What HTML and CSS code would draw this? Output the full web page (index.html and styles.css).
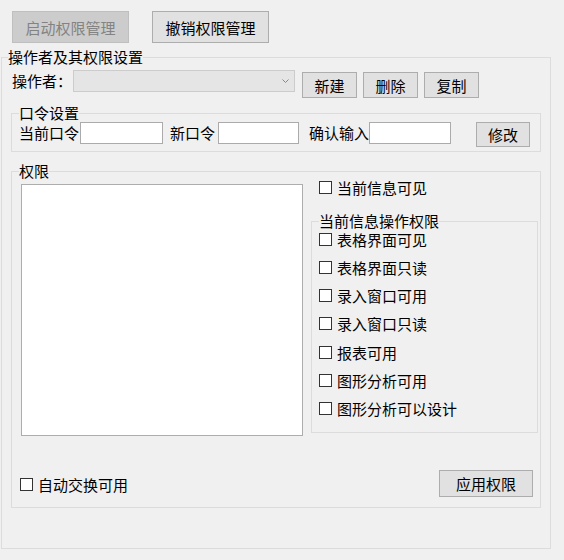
FILE: index.html
```html
<!DOCTYPE html>
<html lang="zh-CN">
<head>
    <meta charset="UTF-8">
    <title>权限管理</title>
    <link rel="stylesheet" href="styles.css">
</head>
<body>
    <div class="toolbar">
        <button class="btn btn-wide" disabled>启动权限管理</button>
        <button class="btn btn-wide">撤销权限管理</button>
    </div>

    <fieldset class="group group-outer">
        <legend>操作者及其权限设置</legend>
        <div class="operator-row">
            <span class="operator-label">操作者：</span>
            <div class="combo">
                <svg width="7" height="4" viewBox="0 0 7 4"><path d="M0.5 0.5 L3.5 3.5 L6.5 0.5" fill="none" stroke="#888" stroke-width="1"/></svg>
            </div>
            <button class="btn btn-small">新建</button>
            <button class="btn btn-small">删除</button>
            <button class="btn btn-small">复制</button>
        </div>

        <fieldset class="group group-password">
            <legend>口令设置</legend>
            <div class="password-row">
                <span class="pw-label pw-current">当前口令</span>
                <div class="input input-current"></div>
                <span class="pw-label pw-new">新口令</span>
                <div class="input input-new"></div>
                <span class="pw-label pw-confirm">确认输入</span>
                <div class="input input-confirm"></div>
                <button class="btn btn-modify">修改</button>
            </div>
        </fieldset>

        <fieldset class="group group-rights">
            <legend>权限</legend>
            <div class="rights-body">
                <div class="listbox"></div>
                <div class="rights-side">
                    <label class="check check-top"><span class="box"></span>当前信息可见</label>
                    <fieldset class="group group-ops">
                        <legend>当前信息操作权限</legend>
                        <div class="check-list">
                            <label class="check"><span class="box"></span>表格界面可见</label>
                            <label class="check"><span class="box"></span>表格界面只读</label>
                            <label class="check"><span class="box"></span>录入窗口可用</label>
                            <label class="check"><span class="box"></span>录入窗口只读</label>
                            <label class="check"><span class="box"></span>报表可用</label>
                            <label class="check"><span class="box"></span>图形分析可用</label>
                            <label class="check"><span class="box"></span>图形分析可以设计</label>
                        </div>
                    </fieldset>
                </div>
            </div>
            <div class="rights-footer">
                <label class="check check-auto"><span class="box"></span>自动交换可用</label>
                <button class="btn btn-apply">应用权限</button>
            </div>
        </fieldset>
    </fieldset>
</body>
</html>
```

FILE: styles.css
```css
body {
    margin: 0;
    width: 564px;
    height: 560px;
    background: #f0f0f0;
    font-family: "Noto Sans CJK SC", "Noto Sans", sans-serif;
    font-size: 15px;
    color: #000;
    overflow: hidden;
}
.toolbar {
    display: flex;
    gap: 23px;
    padding: 11px 0 0 12px;
}
.btn {
    box-sizing: border-box;
    margin: 0;
    padding: 0;
    background: #e1e1e1;
    border: 1px solid #adadad;
    border-radius: 0;
    font-family: inherit;
    font-size: 15px;
    line-height: 1;
    color: #000;
}
.btn:disabled {
    background: #cccccc;
    border-color: #bfbfbf;
    color: #838383;
}
.btn-wide {
    width: 117px;
    height: 32px;
}
.group {
    box-sizing: border-box;
    margin: 0;
    border: 1px solid #dcdcdc;
    min-inline-size: 0;
}
.group legend {
    padding: 0;
    font-size: 15px;
    line-height: 16px;
}
.group-outer {
    margin: 6px 0 0 1px;
    width: 550px;
    padding: 0 2px 40px 6px;
}
.operator-row {
    display: flex;
    align-items: flex-start;
    margin-top: 5px;
    padding-left: 4px;
}
.operator-label {
    width: 61px;
    line-height: 22px;
}
.combo {
    box-sizing: border-box;
    width: 222px;
    height: 22px;
    background: #e5e5e5;
    border: 1px solid #cccccc;
    display: flex;
    align-items: center;
    justify-content: flex-end;
    padding-right: 5px;
}
.btn-small {
    width: 55px;
    height: 26px;
    margin-top: 2px;
    margin-left: 6px;
}
.btn-small:first-of-type {
    margin-left: 7px;
}
.group-password {
    width: 530px;
    margin: 7px 0 0 3px;
    padding: 0 0 4px 7px;
}
.password-row {
    display: flex;
    align-items: flex-start;
    margin-top: 1px;
}
.pw-label {
    line-height: 22px;
    white-space: nowrap;
}
.pw-current {
    width: 61px;
}
.pw-new {
    width: 45px;
    margin-left: 7px;
}
.pw-confirm {
    width: 60px;
    margin-left: 10px;
}
.input {
    box-sizing: border-box;
    height: 22px;
    background: #fff;
    border: 1px solid #ababab;
}
.input-current {
    width: 83px;
}
.input-new {
    width: 81px;
    margin-left: 3px;
}
.input-confirm {
    width: 82px;
}
.btn-modify {
    width: 54px;
    height: 25px;
    margin-left: 25px;
}
.group-rights {
    width: 530px;
    margin: 11px 0 0 3px;
    padding: 0 2px 10px 7px;
}
.rights-body {
    display: grid;
    grid-template-columns: 282px 1fr;
    column-gap: 8px;
    margin-left: 2px;
}
.listbox {
    box-sizing: border-box;
    height: 252px;
    margin-top: 5px;
    background: #fff;
    border: 1px solid #adadad;
}
.rights-side {
    display: flex;
    flex-direction: column;
}
.check {
    display: flex;
    align-items: center;
    height: 20px;
    font-size: 15px;
    white-space: nowrap;
}
.box {
    box-sizing: border-box;
    flex: none;
    width: 13px;
    height: 13px;
    margin-right: 5px;
    background: #fff;
    border: 1px solid #333;
}
.check-top {
    height: 16px;
    margin-left: 8px;
}
.group-ops {
    margin-top: 18px;
    padding: 0 0 13px 7px;
}
.check-list {
    display: flex;
    flex-direction: column;
    gap: 8.33px;
}
.rights-footer {
    display: flex;
    justify-content: space-between;
    align-items: center;
    margin-top: 34px;
}
.check-auto {
    margin-left: 1px;
    margin-top: 2px;
}
.btn-apply {
    width: 94px;
    height: 27px;
    margin-right: 5px;
}
```
